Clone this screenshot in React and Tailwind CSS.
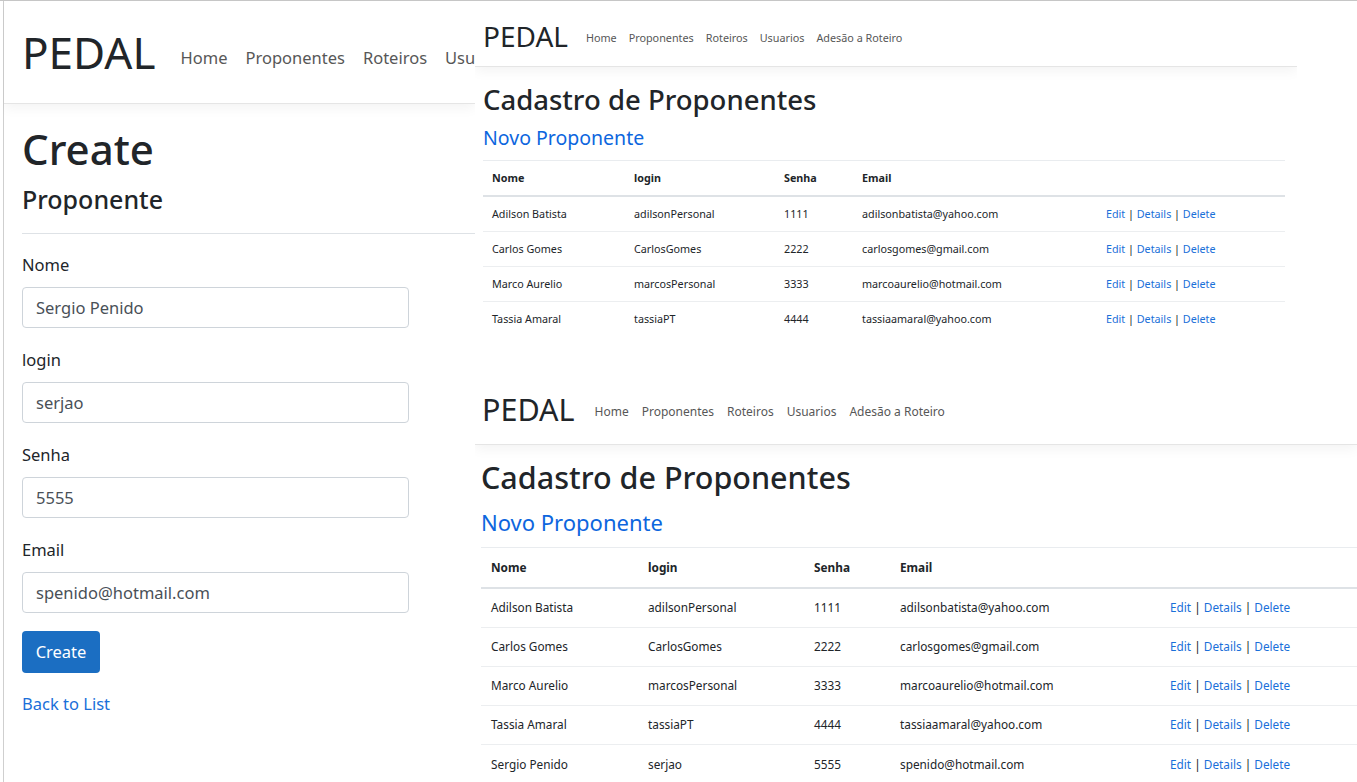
import { useState } from 'react';

const navLinks = ['Home', 'Proponentes', 'Roteiros', 'Usuarios', 'Adesão a Roteiro'];

const proponentes = [
  { nome: 'Adilson Batista', login: 'adilsonPersonal', senha: '1111', email: 'adilsonbatista@yahoo.com' },
  { nome: 'Carlos Gomes', login: 'CarlosGomes', senha: '2222', email: 'carlosgomes@gmail.com' },
  { nome: 'Marco Aurelio', login: 'marcosPersonal', senha: '3333', email: 'marcoaurelio@hotmail.com' },
  { nome: 'Tassia Amaral', login: 'tassiaPT', senha: '4444', email: 'tassiaamaral@yahoo.com' },
  { nome: 'Sergio Penido', login: 'serjao', senha: '5555', email: 'spenido@hotmail.com' },
];

// one set of classes for each screenshot size
const sizes = {
  small: {
    nav: 'h-[66px] pl-[8px] pt-[4px]',
    brand: 'text-[28px] mr-[18px]',
    links: 'gap-[12px] text-[10.8px] pt-[5px]',
    content: 'pl-[8px]',
    title: 'mt-[16px] text-[27.5px] leading-[33px]',
    newLink: 'mt-[10px] text-[19.5px] leading-[24px]',
    table: 'mt-[10px] w-[802px]',
    cols: 'grid-cols-[142px_150px_78px_244px_188px]',
    head: 'h-[37px]',
    row: 'h-[35px]',
    cell: 'pl-[9px] text-[10.75px]',
  },
  large: {
    nav: 'h-[74px] pl-[7px] pt-[4px]',
    brand: 'text-[30.5px] mr-[20px]',
    links: 'gap-[13px] text-[12px] pt-[4px]',
    content: 'pl-[6px]',
    title: 'mt-[14px] text-[30.5px] leading-[37px]',
    newLink: 'mt-[13px] text-[22px] leading-[27px]',
    table: 'mt-[11px] w-[876px]',
    cols: 'grid-cols-[157px_166px_86px_270px_197px]',
    head: 'h-[42px]',
    row: 'h-[39px]',
    cell: 'pl-[10px] text-[11.8px]',
  },
};

function Nav({ size }) {
  return (
    <nav
      className={`flex items-center border-b border-[#e5e5e5] shadow-[0_4px_12px_rgba(0,0,0,0.05)] ${size.nav}`}
    >
      <span className={`leading-none text-[#212529] ${size.brand}`}>PEDAL</span>
      <div className={`flex items-center text-[#575757] ${size.links}`}>
        {navLinks.map((link) => (
          <a key={link} className="whitespace-nowrap">
            {link}
          </a>
        ))}
      </div>
    </nav>
  );
}

function Actions() {
  return (
    <span className="whitespace-nowrap text-[#212529]">
      <a className="text-[#1a6fd9]">Edit</a> | <a className="text-[#1a6fd9]">Details</a> |{' '}
      <a className="text-[#1a6fd9]">Delete</a>
    </span>
  );
}

function ListPanel({ size, rows }) {
  return (
    <div className="h-full bg-white">
      <Nav size={size} />
      <div className={size.content}>
        <h1 className={`font-medium text-[#212529] ${size.title}`}>Cadastro de Proponentes</h1>
        <p className={`text-[#0d66de] ${size.newLink}`}>
          <a>Novo Proponente</a>
        </p>
        <div className={`text-[#212529] ${size.table}`}>
          <div
            className={`grid items-center border-t border-b-2 border-t-[#e9ecef] border-b-[#dee2e6] font-bold ${size.cols} ${size.head}`}
          >
            <div className={size.cell}>Nome</div>
            <div className={size.cell}>login</div>
            <div className={size.cell}>Senha</div>
            <div className={size.cell}>Email</div>
            <div className={size.cell} />
          </div>
          {rows.map((p, i) => (
            <div
              key={p.login}
              className={`grid items-center ${size.cols} ${size.row} ${
                i < rows.length - 1 ? 'border-b border-[#eceef0]' : ''
              }`}
            >
              <div className={size.cell}>{p.nome}</div>
              <div className={size.cell}>{p.login}</div>
              <div className={size.cell}>{p.senha}</div>
              <div className={size.cell}>{p.email}</div>
              <div className={size.cell}>
                <Actions />
              </div>
            </div>
          ))}
        </div>
      </div>
    </div>
  );
}

function Field({ label, value, last }) {
  const [text, setText] = useState(value);
  return (
    <div className={last ? 'mb-[18px]' : 'mb-[20px]'}>
      <label className="block text-[16.5px] leading-[24px] text-[#212529]">{label}</label>
      <input
        value={text}
        onChange={(event) => setText(event.target.value)}
        className="mt-[10px] block h-[41px] w-[387px] rounded-[4px] border border-[#ced4da] bg-white px-[13px] text-[16.5px] text-[#495057] outline-none"
      />
    </div>
  );
}

function CreatePanel() {
  return (
    <div className="h-full border-l border-[#cfcfcf] bg-white">
      <nav className="flex h-[103px] items-center border-b border-[#e5e5e5] pl-[18px] shadow-[0_4px_12px_rgba(0,0,0,0.05)]">
        <span className="mr-[25px] text-[44px] leading-none text-[#212529]">PEDAL</span>
        <div className="flex items-center gap-[18px] pt-[13px] text-[16.5px] text-[#575757]">
          {navLinks.map((link) => (
            <a key={link} className="whitespace-nowrap">
              {link}
            </a>
          ))}
        </div>
      </nav>
      <div className="pl-[18px]">
        <h1 className="mt-[20px] text-[42px] font-medium leading-[50px] text-[#212529]">Create</h1>
        <h4 className="mt-[10px] text-[25px] font-medium leading-[30px] text-[#212529]">Proponente</h4>
        <hr className="mt-[19px] border-[#dee2e6]" />
        <div className="mt-[19px]">
          <Field label="Nome" value="Sergio Penido" />
          <Field label="login" value="serjao" />
          <Field label="Senha" value="5555" />
          <Field label="Email" value="spenido@hotmail.com" last />
          <button
            type="button"
            className="h-[42px] w-[78px] rounded-[4px] bg-[#1b6ec2] text-[16.5px] text-white"
          >
            Create
          </button>
          <p className="mt-[19px] text-[16.5px] leading-[24px]">
            <a className="text-[#1a6fd9]">Back to List</a>
          </p>
        </div>
      </div>
    </div>
  );
}

export default function App() {
  return (
    <div className="relative h-[782px] w-[1357px] overflow-hidden border-t border-[#c6c6c6] bg-white font-['Noto_Sans',sans-serif]">
      <div className="absolute left-[3px] top-0 h-[781px] w-[472px] overflow-hidden">
        <CreatePanel />
      </div>
      <div className="absolute left-[475px] top-0 h-[370px] w-[822px] overflow-hidden">
        <ListPanel size={sizes.small} rows={proponentes.slice(0, 4)} />
      </div>
      <div className="absolute left-[475px] top-[370px] h-[411px] w-[882px] overflow-hidden">
        <ListPanel size={sizes.large} rows={proponentes} />
      </div>
    </div>
  );
}
